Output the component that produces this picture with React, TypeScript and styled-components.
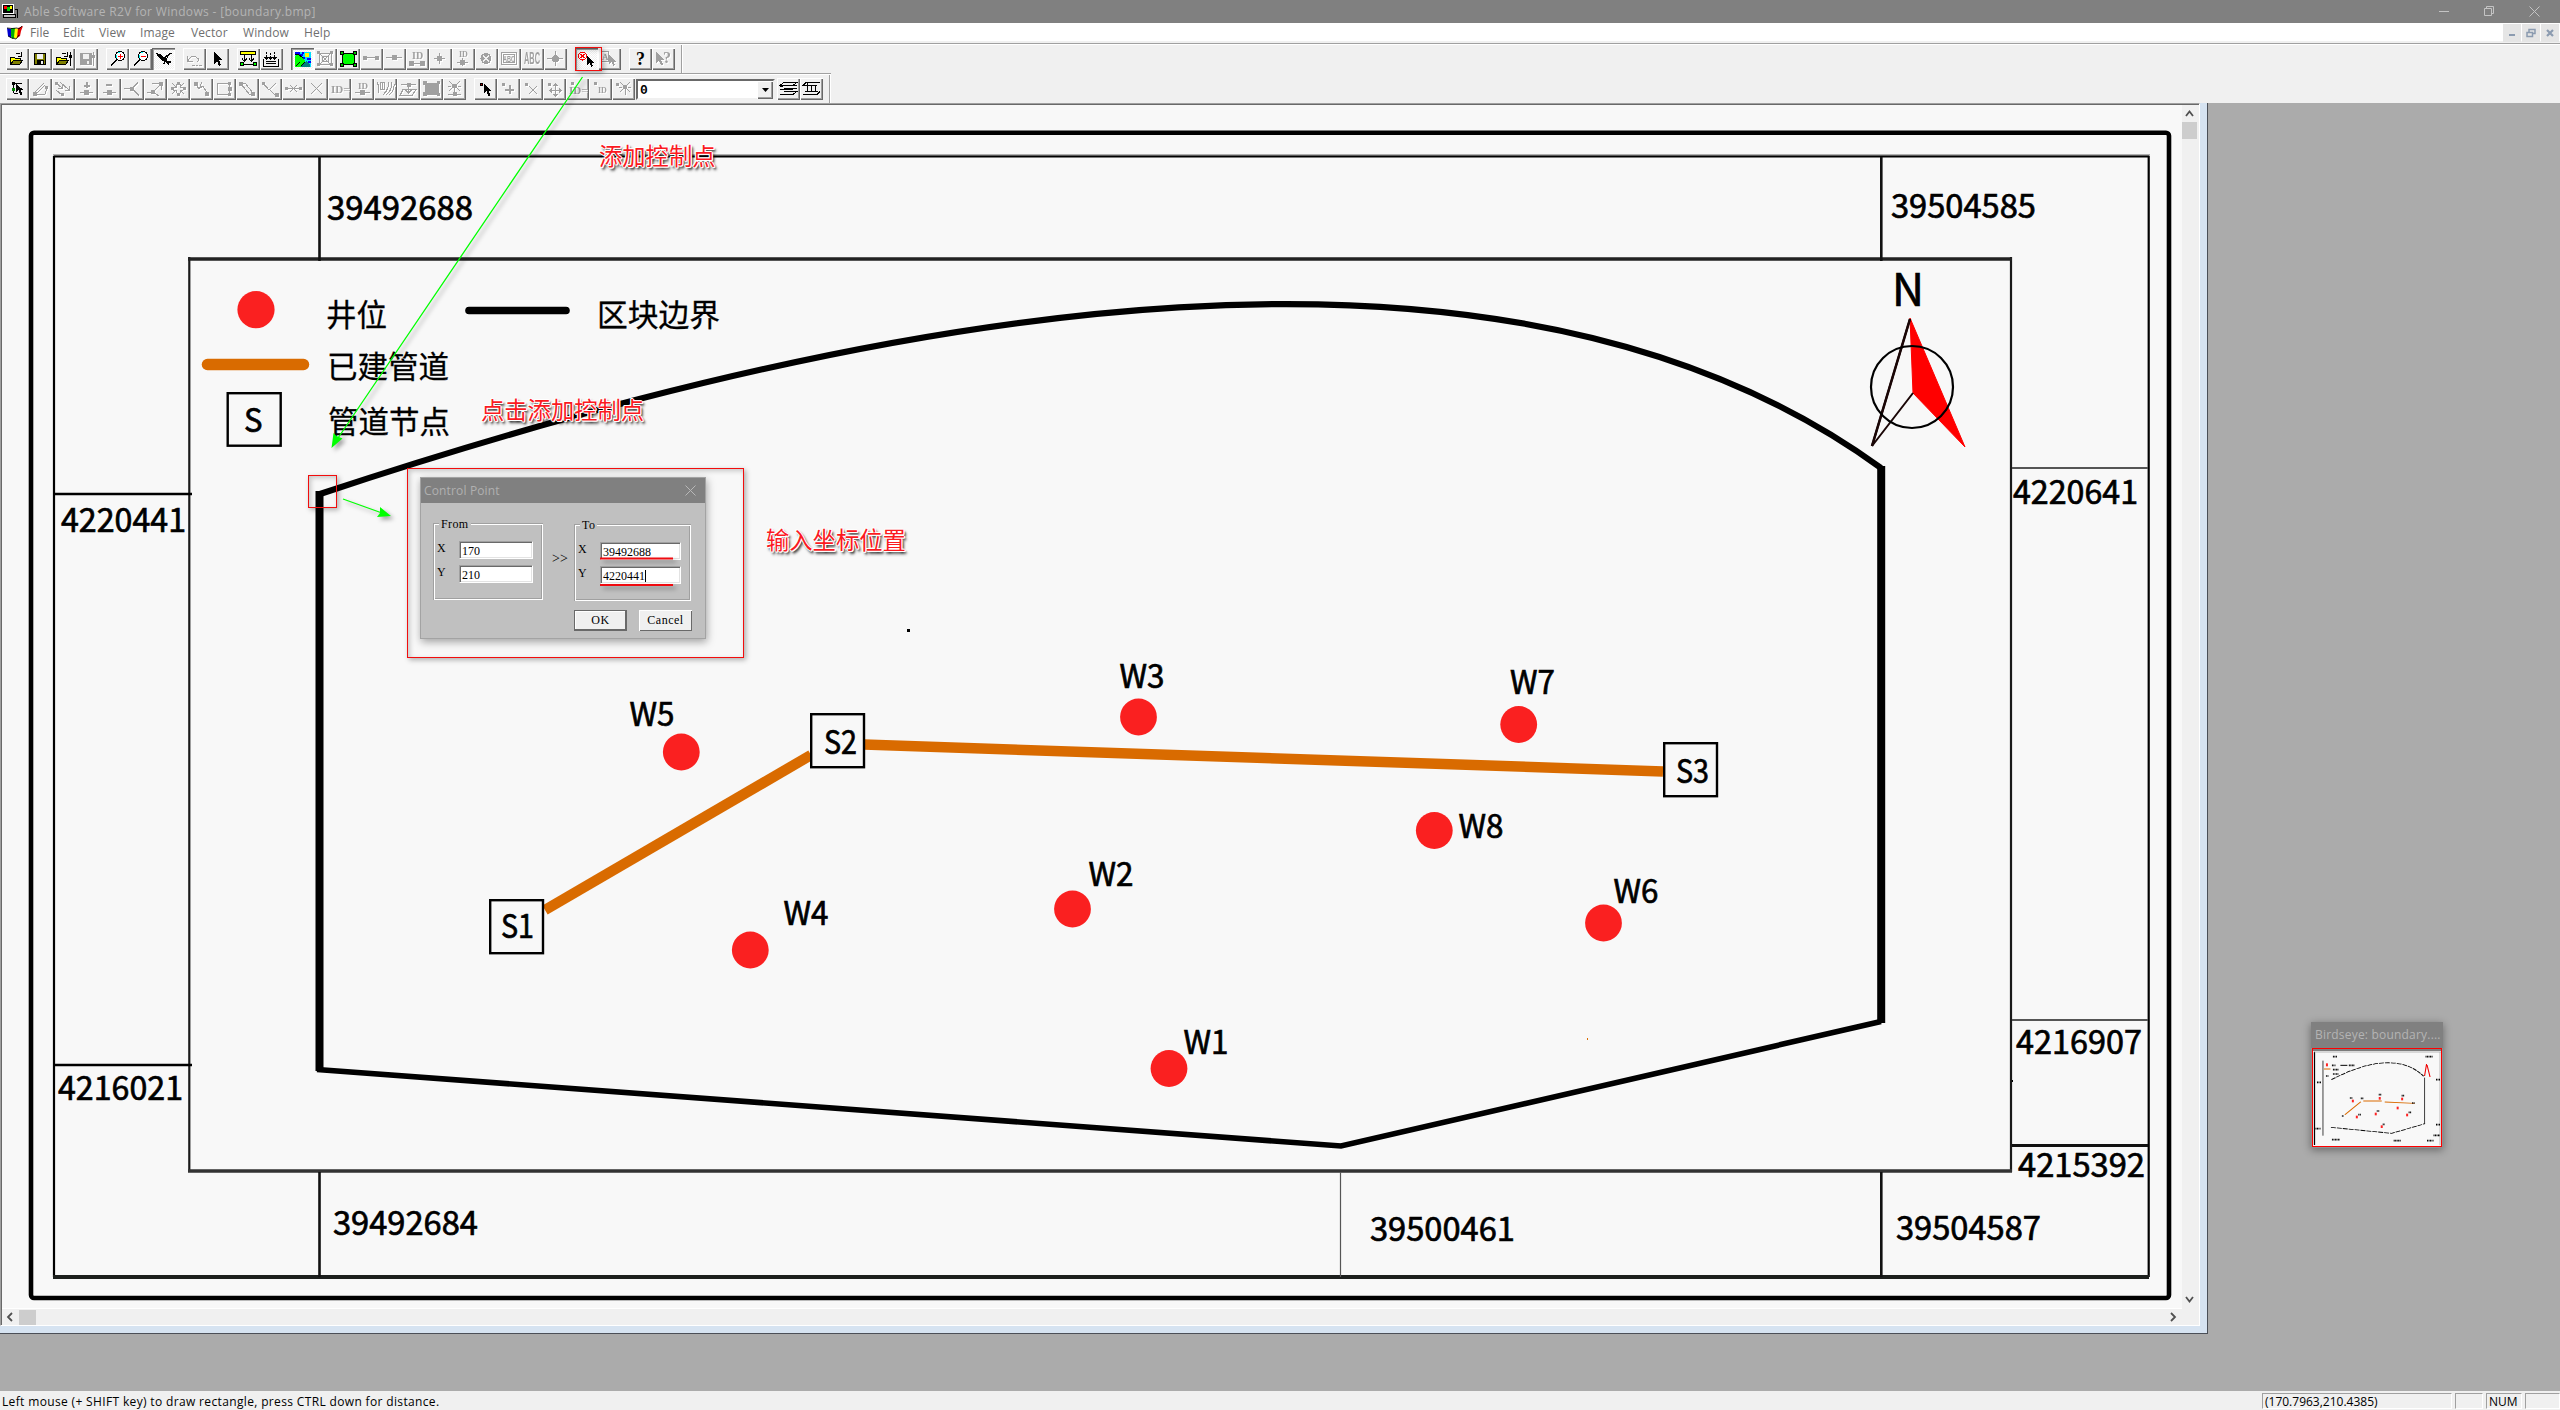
import React from "react";
import styled, { createGlobalStyle, css } from "styled-components";

const UI = `"Open Sans", "Noto Sans", "Noto Sans CJK SC", sans-serif`;
const CJK = `"Noto Sans CJK SC", "Noto Sans", sans-serif`;
const PIXEL = `"Liberation Serif", "Noto Sans CJK SC", serif`;

const Global = createGlobalStyle`
  html, body { margin: 0; padding: 0; overflow: hidden; }
  * { box-sizing: border-box; }
`;

const Screen = styled.div`
  position: relative;
  display: flex;
  flex-direction: column;
  width: 2560px;
  height: 1410px;
  background: #f0f0f0;
  font-family: ${UI};
  font-size: 12px;
  color: #000;
  overflow: hidden;
`;

const TitleBar = styled.header`
  display: flex;
  align-items: center;
  height: 23px;
  flex: none;
  padding: 0 20px 0 2px;
  background: #808080;
  color: #b4b4b4;
`;
const TitleText = styled.span`
  flex: 1;
  margin-left: 6px;
  line-height: 23px;
  letter-spacing: 0.33px;
  white-space: nowrap;
`;
const WindowButtons = styled.div`
  display: flex;
  gap: 35px;
  height: 20px;
  align-items: center;
`;

const MenuBar = styled.nav`
  display: flex;
  align-items: center;
  height: 18px;
  flex: none;
  padding: 0 1px 0 7px;
  background: #fff;
  color: #6f6f6f;
`;
const MenuList = styled.div`
  display: flex;
  flex: 1;
  margin-left: 7px;
`;
const MenuItem = styled.span<{ $w: number }>`
  width: ${(p) => p.$w}px;
  line-height: 18px;
  padding-top: 1px;
  letter-spacing: 0.1px;
  white-space: nowrap;
`;
const MdiButtons = styled.div`
  display: flex;
  gap: 1px;
  height: 18px;
  margin-top: 2px;
`;
const MdiButton = styled.div`
  display: flex;
  align-items: center;
  justify-content: center;
  width: 18px;
  height: 18px;
  background: #e5e5e5;
`;

const ToolArea = styled.div`
  height: 62px;
  flex: none;
  padding-top: 2px;
`;
const ToolRow = styled.div<{ $w?: number }>`
  display: flex;
  align-items: flex-start;
  height: 30px;
  padding: 4px 0 0 6px;
  border-top: 1px solid #a0a0a0;
  box-shadow: inset 0 1px #fff;
  width: ${(p) => (p.$w ? p.$w + "px" : "100%")};
`;
const RowEnd = styled.i<{ $ml: number }>`
  width: 2px;
  height: 28px;
  margin: -3px 0 0 ${(p) => p.$ml}px;
  background: linear-gradient(90deg, #a0a0a0 50%, #fff 50%);
`;
const Group = styled.div<{ $ml?: number }>`
  display: flex;
  margin-left: ${(p) => p.$ml ?? 0}px;
`;
const ToolButton = styled.button<{ $on?: boolean; $off?: boolean }>`
  width: 23px;
  height: 22px;
  padding: 0;
  border: 0;
  background: #f0f0f0;
  box-shadow: inset 1px 1px #fff, inset -1px -1px #696969, inset -2px -2px #a0a0a0;
  ${(p) =>
    p.$on &&
    css`
      background: repeating-conic-gradient(#fff 0 25%, #f0f0f0 0 50%) 0 0 / 2px 2px;
      box-shadow: inset 1px 1px #696969, inset 2px 2px #a0a0a0, inset -1px -1px #fff;
    `}
  svg {
    display: block;
    color: ${(p) => (p.$off ? "#a0a0a0" : "#000")};
    filter: ${(p) => (p.$off ? "drop-shadow(1px 1px 0 #fff)" : "none")};
  }
`;

const Combo = styled.div`
  display: flex;
  width: 139px;
  height: 21px;
  margin: 1px 2px 0 1px;
  border: 2px solid;
  border-color: #696969 #f0f0f0 #f0f0f0 #696969;
  background: #fff;
`;
const ComboValue = styled.span`
  flex: 1;
  padding-left: 2px;
  font: bold 13px/19px "Liberation Mono", monospace;
`;
const ComboArrow = styled.div`
  display: flex;
  align-items: center;
  justify-content: center;
  width: 16px;
  height: 18px;
  background: #f0f0f0;
  box-shadow: inset 1px 1px #fff, inset -1px -1px #696969, inset -2px -2px #a0a0a0;
`;

const Workspace = styled.main`
  position: relative;
  height: 1288px;
  flex: none;
  background: #ababab;
`;
const ChildWindow = styled.section`
  width: 2208px;
  height: 1231px;
  padding: 0 7px 7px 0;
  background: #d6e3f1;
  border-right: 1px solid #4b4f57;
  border-bottom: 1px solid #4b4f57;
`;
const View = styled.div`
  display: grid;
  grid-template-columns: 2180px 17px;
  grid-template-rows: 1203px 17px;
  width: 2200px;
  height: 1223px;
  border-top: 1px solid #a0a0a0;
  border-left: 1px solid #a0a0a0;
  border-right: 1px solid #fff;
  border-bottom: 1px solid #fff;
  background: #f0f0f0;
  box-shadow: inset 1px 1px #696969;
  padding: 1px 0 0 1px;
`;
const Paper = styled.div`
  background: #f8f8f8;
  overflow: hidden;
  svg { display: block; }
`;
const VScroll = styled.div`
  display: flex;
  flex-direction: column;
  align-items: center;
  width: 15px;
  height: 1203px;
`;
const HScroll = styled.div`
  display: flex;
  align-items: center;
  width: 2180px;
  border-top: 1px solid #fff;
`;
const Arrow = styled.div`
  width: 17px;
  height: 17px;
  svg { display: block; }
`;
const Thumb = styled.div<{ $v?: boolean }>`
  width: ${(p) => (p.$v ? 15 : 17)}px;
  height: ${(p) => (p.$v ? 17 : 15)}px;
  background: #cdcdcd;
`;
const Fill = styled.div`
  flex: 1;
`;

const Birdseye = styled.aside`
  position: absolute;
  left: 2311px;
  top: 919px;
  width: 132px;
  height: 126px;
  padding: 0 1px 1px;
  background: #909090;
  box-shadow: 0 2px 8px rgba(0, 0, 0, 0.4);
`;
const BirdTitle = styled.div`
  height: 26px;
  margin: 0 -1px;
  padding-left: 4px;
  line-height: 26px;
  background: #808080;
  color: #b4b4b4;
  white-space: nowrap;
  letter-spacing: 0.2px;
`;
const BirdView = styled.div`
  height: 99px;
  border: 1px solid #f00;
  background: #f8f8f8;
  svg { display: block; }
`;

const StatusBar = styled.footer`
  display: flex;
  gap: 3px;
  height: 19px;
  flex: none;
  padding: 2px 0 1px 2px;
`;
const StatusText = styled.span`
  flex: 1;
  line-height: 18px;
  letter-spacing: 0.35px;
`;
const Pane = styled.span<{ $w: number }>`
  width: ${(p) => p.$w}px;
  padding-left: 2px;
  line-height: 16px;
  border: 1px solid;
  border-color: #a0a0a0 #fff #fff #a0a0a0;
`;

const Frame = styled.div<{ $x: number; $y: number; $w: number; $h: number }>`
  position: absolute;
  left: ${(p) => p.$x}px;
  top: ${(p) => p.$y}px;
  width: ${(p) => p.$w}px;
  height: ${(p) => p.$h}px;
  border: 1px solid #f20d0d;
  box-shadow: 2px 2px 5px rgba(0, 0, 0, 0.3), inset 2px 2px 5px rgba(0, 0, 0, 0.2);
`;
const Note = styled.div<{ $x: number; $y: number }>`
  position: absolute;
  left: ${(p) => p.$x}px;
  top: ${(p) => p.$y}px;
  font: 400 23.3px/26px ${CJK};
  color: #fb1a1f;
  white-space: nowrap;
  text-shadow: 1px 0 #fff, -1px 0 #fff, 0 1px #fff, 0 -1px #fff, 1px 1px #fff, -1px -1px #fff,
    2px 3px 3px rgba(0, 0, 0, 0.75), 2px 2px 2px rgba(0, 0, 0, 0.55);
`;
const Overlay = styled.svg`
  position: absolute;
  inset: 0;
  pointer-events: none;
`;
const Shaded = styled.g`
  filter: drop-shadow(3px 3px 2px rgba(0, 0, 0, 0.35));
`;

const Dialog = styled.div`
  position: absolute;
  left: 420px;
  top: 477px;
  width: 286px;
  height: 162px;
  border: 1px solid #a3a3a3;
  background: #c0c0c0;
  box-shadow: 1px 3px 8px rgba(0, 0, 0, 0.35);
  font: 12px/14px ${PIXEL};
`;
const DialogTitle = styled.div`
  display: flex;
  align-items: center;
  justify-content: space-between;
  height: 25px;
  padding: 0 9px 0 3px;
  background: #808080;
  color: #b0b0b0;
  font: 12px/25px ${UI};
  letter-spacing: 0.15px;
`;
const DialogBody = styled.div`
  display: flex;
  align-items: flex-start;
  padding: 20px 13px 0 12px;
`;
const Box = styled.fieldset<{ $w: number; $top: number }>`
  width: ${(p) => p.$w}px;
  height: 77px;
  min-width: 0;
  margin: ${(p) => p.$top}px 0 0;
  padding: 18px 0 0 4px;
  border: 0;
  position: relative;
  box-shadow: inset 1px 1px #a0a0a0, inset -1px -1px #fff, inset 2px 2px #fff, inset -2px -2px #a0a0a0;
`;
const BoxTitle = styled.span`
  position: absolute;
  left: 6px;
  top: -6px;
  padding: 0 2px;
  background: #c0c0c0;
  letter-spacing: 0.4px;
`;
const Field = styled.label<{ $gap: number }>`
  display: grid;
  grid-template-columns: ${(p) => p.$gap}px 1fr;
  height: 24px;
`;
const Value = styled.span<{ $w: number }>`
  width: ${(p) => p.$w}px;
  height: 18px;
  padding: 1px 0 0 2px;
  font: 12px/16px ${PIXEL};
  background: #fff;
  border: 1px solid;
  border-color: #a0a0a0 #fff #fff #a0a0a0;
  box-shadow: inset 1px 1px #696969, inset -1px -1px #e3e3e3;
`;
const Caret = styled.i`
  display: inline-block;
  width: 1px;
  height: 12px;
  background: #000;
  vertical-align: -2px;
`;
const Chevrons = styled.span`
  width: 31px;
  padding: 29px 0 0 3px;
  text-align: center;
  font-size: 14px;
`;
const DialogButtons = styled.div`
  display: flex;
  gap: 12px;
  justify-content: flex-end;
  padding: 9px 13px 0 0;
`;
const DialogButton = styled.button<{ $main?: boolean }>`
  width: 53px;
  height: 21px;
  padding: 0;
  border: 0;
  background: #f0f0f0;
  font: 12px/21px ${PIXEL};
  letter-spacing: 0.5px;
  box-shadow: ${(p) =>
    p.$main
      ? "inset 0 0 0 1px #696969, inset -2px -2px #696969, inset 2px 2px #fff"
      : "inset 1px 1px #fff, inset -1px -1px #696969"};
`;

/* ---------- toolbar glyphs ---------- */

const L = ({ d, c = "currentColor", w = 1, f = "none" }: { d: string; c?: string; w?: number; f?: string }) => (
  <path d={d} stroke={c} strokeWidth={w} fill={f} />
);
const Sq = ({ x, y, s = 3, c = "currentColor" }: { x: number; y: number; s?: number; c?: string }) => (
  <rect x={x} y={y} width={s} height={s} fill={c} />
);
const Tx = ({ x, y, s, t }: { x: number; y: number; s: number; t: string }) => (
  <text x={x} y={y} fontSize={s} fontWeight="bold" fontFamily="Liberation Serif, serif" fill="currentColor">{t}</text>
);
const folder = (
  <>
    <path d="M4.500 16.500V9.500h4l1 1h5v2" stroke="#000" fill="#ffff00" />
    <path d="M4.500 16.500l3-4h9l-3 4z" stroke="#000" fill="#808000" />
    <L d="M9.500 6.500q3-3 5 0M15.500 4v4h-4" />
  </>
);
const disk = (c: string, fill: string) => (
  <>
    <path d="M5.500 5.500h11v11h-11z" stroke={c} fill={fill} />
    <rect x="8" y="6" width="6" height="5" fill="#f0f0f0" />
    <rect x="8" y="12" width="7" height="4" fill={c} />
    <rect x="12" y="13" width="2" height="3" fill="#f0f0f0" />
  </>
);
const slider = <><L d="M18.500 4v14" /><Sq x={17} y={7} /></>;
const pointer = <path d="M8 4v12l3-3 2 5 2-1-2-5h4z" fill="currentColor" />;
const smallPtr = <path d="M11 7v9l2.500-2 2 4 1.500-1-2-3.500h3z" fill="currentColor" />;
const lens = (plus: boolean) => (
  <>
    <circle cx="14" cy="8" r="4.500" stroke="#000" fill="#fff" />
    <L d="M10.500 7v3M12 4.500h2" c="#00ffff" />
    <L d="M10.500 12L5 17.500" w={2} />
    <L d={plus ? "M11.500 8.500h5M14 6v5" : "M11.500 8.500h5"} c="#f00" />
  </>
);

const glyphs: Record<string, React.ReactNode> = {
  open: folder,
  save: disk("#000", "#808000"),
  openProj: <>{folder}{slider}</>,
  saveProj: <>{disk("#a0a0a0", "#a0a0a0")}{slider}</>,
  zoomIn: lens(true),
  zoomOut: lens(false),
  bird: (
    <>
      <path d="M4 5l4 1 4 4 2 0 2-1-2 5-3-1-3-2-2-2z" fill="#000" />
      <L d="M12 10l6-4M18 5.500h2M12 12l5 4M13 11l-1 5M15 14h4" w={1.500} />
    </>
  ),
  undo: <L d="M4.500 8v5h5M5 13q3-7 8-4t1 5M9 17.500h3M13 17.500h2M16 17.500h3" />,
  pointer,
  lineTop: (
    <>
      <rect x="3.500" y="3.500" width="15" height="3" fill="#ffff00" stroke="#000" />
      <L d="M7.500 7v6M5 10.500l2.500 3 2.500-3M14.500 7v6M12 10.500l2.500 3 2.500-3M6 16.500h11" />
      <path d="M3.500 14.500h3v3h-3zM16.500 14.500h3v3h-3z" fill="#00ff00" stroke="#000" />
    </>
  ),
  lines: (
    <L d="M6.500 4v2M6.500 7v4M10.500 5v2M10.500 8v3M14.500 4v2M14.500 7v4M4.500 9l2 2 2-2M8.500 9l2 2 2-2M12.500 9l2 2 2-2M3.500 11v7h15v-7M6 13.500h10M6 15.500h10" />
  ),
  image: (
    <>
      <rect x="4" y="4" width="16" height="15" fill="#00e0ff" />
      <L d="M4 5h5M8 7h4M16 11h4M11 10h3M11 5h2M17 14h3" c="#0000ff" w={1.500} />
      <path d="M4 8l3-2 5 4 2 3v3l-4 3H4z" fill="#00ff00" />
      <path d="M10 19l5-6 4 3v3z" fill="#008080" />
      <L d="M4 7l3-1 5 4M5 18l4-4M10 18l4-4" c="#000" />
      <circle cx="16" cy="7" r="2.500" fill="#ffff00" />
    </>
  ),
  nested: (
    <>
      <L d="M5.500 5.500h12v11h-12zM8.500 8.500h6v5h-6zM4 4l14 14M18 4L4 18" />
      <Sq x={3} y={3} /><Sq x={16} y={3} /><Sq x={3} y={15} /><Sq x={16} y={15} />
    </>
  ),
  area: (
    <>
      <rect x="5.500" y="5.500" width="12" height="11" fill="#00ff00" stroke="#000" />
      {[[3, 3], [16, 3], [3, 15], [16, 15]].map(([x, y]) => (
        <rect key={x + "" + y} x={x + 0.5} y={y + 0.5} width="3" height="3" fill="#00c000" stroke="#000" />
      ))}
    </>
  ),
  segment: <><L d="M4 9.500h15" /><Sq x={3} y={8} s={4} /><Sq x={15} y={8} s={4} /></>,
  node: <><L d="M3 9.500h16" /><Sq x={9} y={7} s={5} /></>,
  idSegment: <><Tx x={6} y={11} s={10} t="ID" /><L d="M4 15.500h14" /><Sq x={3} y={13} s={5} /><Sq x={14} y={13} s={5} /></>,
  point: <><L d="M10.500 5v11M5 10.500h11" /><Sq x={8} y={8} s={5} /></>,
  idPoint: <><Tx x={7} y={9} s={8} t="ID" /><L d="M10.500 10v8M5 14.500h11" /><Sq x={8} y={12} s={5} /></>,
  crossDot: <><circle cx="11" cy="10.500" r="5.500" fill="currentColor" /><L d="M8 7.500l6 6M14 7.500l-6 6" c="#f0f0f0" /></>,
  abcBox: <><L d="M3.500 4.500h15v12h-15zM5.500 6.500h11v8h-11z" /><text x="5" y="14" fontSize="9" textLength="12" lengthAdjust="spacingAndGlyphs" fontWeight="bold" fontFamily="Liberation Sans" fill="currentColor">ABC</text></>,
  abc: <text x="3" y="16" fontSize="16" textLength="16" lengthAdjust="spacingAndGlyphs" fontWeight="bold" fontFamily="Liberation Sans" fill="currentColor">ABC</text>,
  target: <><L d="M11.500 3v15M3 10.500h16" /><circle cx="11.500" cy="10.500" r="3.500" fill="currentColor" /></>,
  control: (
    <>
      <circle cx="7.500" cy="8" r="4" stroke="#f00" fill="none" />
      <L d="M5.500 6l4 4M9.500 6l-4 4" c="#f00" />
      <path d="M12 8v9l2.500-2 2 4 1.500-1-2-3.500h3z" fill="#000" />
    </>
  ),
  textPtr: <><L d="M3.500 3.500h7v10h-7z" /><Tx x={4} y={12} s={9} t="A" />{smallPtr}</>,
  help: <text x="7" y="17" fontSize="18" fontWeight="bold" fontFamily="Liberation Serif" fill="#000">?</text>,
  ctxHelp: <><path d="M4 4v11l3-2.500 2 5 2-1-2-4.500h3z" fill="currentColor" /><text x="11" y="15" fontSize="16" fontWeight="bold" fontFamily="Liberation Serif" fill="currentColor">?</text></>,

  edit: (
    <>
      <L d="M7.500 5v10M7.500 5.500h8M7.500 15.500h4" />
      <path d="M10 6v8l2.500-2 2 5 2-1-2-4h3z" fill="#000" />
      <Sq x={6} y={4} c="#000" /><Sq x={6} y={10} s={3} c="#008000" />
    </>
  ),
  draw: <><L d="M6 14L15 5M8 15l8-8M5 16.500h11M16 16l2-6" /><Sq x={4} y={14} s={4} /><Sq x={16} y={8} /></>,
  drag: <><L d="M4 5l6 5M10 6v4H6M4 12l6 5M8 4l9 8M17 8v4h-4" /><Sq x={3} y={4} /><Sq x={9} y={15} /></>,
  addNode: <><L d="M11.500 4v6M8.500 7.500h6" w={2} /><L d="M5 14.500h13" /><Sq x={9} y={12} s={5} /></>,
  delNode: <><L d="M8 7h6" w={2} /><L d="M5 14.500h13" /><Sq x={9} y={12} s={5} /></>,
  split: <><L d="M3 10.500h8l6-6M11 10.500l7 7" /><Sq x={9} y={9} s={4} /></>,
  moveSeg: <><L d="M3 14h6l6-6M8 5.500h9M17 5v7M9 14l6 4" /><Sq x={7} y={12} s={4} /><Sq x={15} y={4} s={4} /></>,
  explode: (
    <>
      <L d="M5 5l4 4M17 5l-4 4M5 16l4-4M17 16l-4-4M9 6v3H6M13 6v3h3M9 15v-3H6M13 15v-3h3" />
      <Sq x={4} y={9} /><Sq x={16} y={9} /><Sq x={10} y={4} /><Sq x={10} y={15} />
    </>
  ),
  join: <><L d="M5 5l4 6 4-3 4 7M12 4l-3 7" /><Sq x={4} y={4} s={4} /><Sq x={15} y={14} s={4} /></>,
  close: <><L d="M4.500 5.500h12v11h-12z" /><Sq x={15} y={4} /><Sq x={15} y={9} s={4} /><Sq x={15} y={15} /></>,
  twoNodes: <><L d="M5 6l9 11M9 5l8 10M6 5h4M14 16h3" /><Sq x={3} y={4} s={4} /><Sq x={15} y={14} s={4} /></>,
  cut: <><L d="M4 5l6 7 7-7M10 11l7 7" /><Sq x={3} y={4} /><Sq x={16} y={15} s={4} /></>,
  cutLine: <><L d="M3 10.500h17M8 7l7 7M15 7l-7 7" /><Sq x={3} y={9} /><Sq x={17} y={9} /></>,
  del: <L d="M6 5l11 11M17 5L6 16" />,
  idEq: <Tx x={3} y={15} s={11} t="ID=" />,
  idNode: <><Tx x={7} y={11} s={9} t="ID" /><L d="M4 14.500h15" /><Sq x={9} y={12} s={5} /></>,
  contour: <L d="M3 4q3 6 1 11M8 4v8M6.500 4.500h4v7h-4zM14 4q2 6-5 13M17 4q2 8-5 13M20 4q1 9-5 13" />,
  surface: <><L d="M6 11.500h13l-4 6H3zM11.500 6v9M8.500 12l3 3 3-3M4 6.500h15" /><Sq x={10} y={5} s={4} /></>,
  polygon: <><rect x="5" y="5" width="14" height="12" fill="currentColor" /><Sq x={3} y={3} s={4} /><Sq x={17} y={3} s={3} /><Sq x={3} y={14} s={4} /><Sq x={17} y={15} s={3} /></>,
  lamp: (
    <>
      <circle cx="11.500" cy="8" r="2.500" fill="currentColor" />
      <L d="M11.500 8v8M6 3l3 3M17 3l-3 3M5 8.500h3M15 8.500h3M6 13l3-3M17 13l-3-3M5 16.500h13" />
      <Sq x={10} y={14} s={4} />
    </>
  ),
  ptEdit: <><L d="M6.500 5.500h2v2h-2z" c="#000" f="#c00000" /><path d="M10 6v9l2.500-2 2 5 2-1-2-4h3z" fill="#000" /></>,
  ptAdd: <><Sq x={5} y={5} /><L d="M12.500 7v9M8 12h9" w={2} /></>,
  ptDel: <><Sq x={5} y={5} /><L d="M9 8l8 8M17 8l-8 8" /></>,
  ptMove: <><Sq x={5} y={5} /><L d="M12.500 6v12M7 12.500h11M10.500 8l2-2 2 2M10.500 16l2 2 2-2M9 10.500l-2 2 2 2M16 10.500l2 2-2 2" /></>,
  ptIdEq: <><Sq x={5} y={4} /><Tx x={3} y={16} s={11} t="ID=" /></>,
  ptId: <><Sq x={5} y={4} /><Tx x={9} y={15} s={8} t="ID" /></>,
  ptLamp: <><Sq x={4} y={5} /><circle cx="13" cy="9" r="2.500" fill="currentColor" /><L d="M13 9v8M8 4l3 3M18 4l-3 3M7 9.500h3M16 9.500h3M8 14l3-3M18 14l-3-3" /></>,
  layers: <L d="M7 4.500h13l-4 3H3zM6 8.500h-3M7 10.500h13M16 11.500H3M7 13.500h13l-4 3H3M20 7.500h-3" />,
  layerTable: <L d="M5 4.500h15M17 7.500H3l3-3M5 13.500h13M7.500 5v8M11.500 8v5M15.500 8v5M3 16.500h14l3-3" />,
};

const Tool = ({ g, on, off }: { g: string; on?: boolean; off?: boolean }) => (
  <ToolButton $on={on} $off={off} aria-label={g}>
    <svg width="23" height="22" viewBox="0 0 23 22" fill="none" shapeRendering="crispEdges">{glyphs[g]}</svg>
  </ToolButton>
);
const off1 = ["segment", "node", "idSegment", "point", "idPoint", "crossDot", "abcBox", "abc", "target"];
const off2 = ["draw", "drag", "addNode", "delNode", "split", "moveSeg", "explode", "join", "close", "twoNodes", "cut", "cutLine", "del", "idEq", "idNode", "contour", "surface", "polygon", "lamp"];
const off3 = ["ptAdd", "ptDel", "ptMove", "ptIdEq", "ptId", "ptLamp"];

/* ---------- map drawing ---------- */

const coords: [string, number, number, number][] = [
  ["39492688", 327, 220, 146],
  ["39504585", 1891, 218, 145],
  ["4220441", 61, 531.5, 125],
  ["4220641", 2013, 504, 125],
  ["4216907", 2016, 1053.5, 126],
  ["4215392", 2018, 1177, 127],
  ["39504587", 1896, 1239.5, 145],
  ["4216021", 58, 1100, 125],
  ["39492684", 333, 1234.5, 145],
  ["39500461", 1370, 1241, 145],
];
const wells: [string, number, number, number, number][] = [
  ["W1", 1169, 1068.5, 1183.5, 1053.5],
  ["W2", 1072.5, 909, 1088.5, 885.5],
  ["W3", 1138.5, 717, 1119.5, 687.5],
  ["W4", 750.3, 950, 783.5, 924.5],
  ["W5", 681.3, 752, 629.5, 726],
  ["W6", 1603.5, 923, 1613.5, 902.5],
  ["W7", 1518.7, 724.5, 1510, 693.5],
  ["W8", 1434.3, 830.5, 1458.5, 837.5],
];
const stations: [string, number, number, number, number][] = [
  ["S1", 489, 899, 501, 938],
  ["S2", 810, 713, 824, 753.5],
  ["S3", 1663, 742, 1676, 782.5],
];
const legend: [string, number, number, number][] = [
  ["井位", 326, 325.5, 61],
  ["区块边界", 597, 325.5, 123],
  ["已建管道", 327, 378, 122],
  ["管道节点", 328, 432.5, 122],
];

const MapDrawing = () => (
  <svg width="2180" height="1203" viewBox="2 105 2180 1203" fill="none" stroke="#000" fontFamily={CJK}>
    <rect x="31" y="132.800" width="2138" height="1165.200" rx="3" strokeWidth="4.600" />
    <path d="M53 155h2097" stroke="#b0b0b0" strokeWidth="2" />
    <path d="M54 156.500h2095M54 156v1121M2148.700 156v1121" strokeWidth="2.200" />
    <path d="M53 1277h2096" stroke="#1c1f1d" strokeWidth="4" />
    <path d="M189.300 257v915M2011 257v915" stroke="#1a1a1a" strokeWidth="2.200" />
    <path d="M188 259h1824" stroke="#222" strokeWidth="3.400" />
    <path d="M188 1171h1824" stroke="#333" strokeWidth="3.600" />
    <path d="M319.500 157v104M1881.300 157v104M319.500 1172v105M1881.300 1172v105" stroke="#111" strokeWidth="2.600" />
    <path d="M1340.500 1172v105" stroke="#555" strokeWidth="1.200" />
    <path d="M54 494h138M54 1065h138" strokeWidth="2.600" />
    <path d="M2012 468h136M2012 1020h136" stroke="#555" strokeWidth="1.800" />
    <path d="M2012 1145.500h136" stroke="#111" strokeWidth="2.800" />
    <path d="M319.500 491V1071M1881.200 466V1023" strokeWidth="8" />
    <path d="M320 494C900 301 1510 198 1881 468" strokeWidth="6.200" />
    <path d="M317 1069.500L1341 1146L1881 1021.500" strokeWidth="5.600" />

    <path d="M545 910L811 755" stroke="#d96b00" strokeWidth="10.500" />
    <path d="M864 744.500L1663 771.500" stroke="#d96b00" strokeWidth="10.500" />

    <g stroke="none" fill="#fa2020">
      <circle cx="256" cy="309.700" r="18.600" />
      {wells.map(([n, x, y]) => <circle key={n} cx={x} cy={y} r="18.400" />)}
    </g>
    <path d="M207.500 364.500h96" stroke="#d96b00" strokeWidth="11.500" strokeLinecap="round" />
    <path d="M469 310.500h97" strokeWidth="7.600" strokeLinecap="round" />
    <rect x="227.700" y="393.200" width="53" height="52.500" strokeWidth="2.400" />
    {stations.map(([n, x, y]) => (
      <rect key={n} x={x + 1.2} y={y + 1.2} width="52.800" height="53" strokeWidth="2.400" fill="#f8f8f8" />
    ))}

    <path d="M1910 318L1913 393L1965 447z" fill="#f00" stroke="#f00" />
    <path d="M1910 319L1872 446L1913 393" stroke="#1a0606" strokeWidth="2" />
    <path d="M1910 319L1872 446" stroke="#1a0606" strokeWidth="2.600" />
    <circle cx="1912" cy="387" r="41" strokeWidth="2.200" />

    <g strokeWidth="0.700" fill="#000" fontSize="33">
      <text x="1892" y="306" fontSize="45" textLength="32" lengthAdjust="spacingAndGlyphs">N</text>
      <text x="244" y="432" textLength="18.500" lengthAdjust="spacingAndGlyphs">S</text>
      {coords.map(([t, x, y, w]) => <text key={t} x={x} y={y} textLength={w} lengthAdjust="spacingAndGlyphs">{t}</text>)}
      {wells.map(([t, , , x, y]) => <text key={t} x={x} y={y} textLength="45" lengthAdjust="spacingAndGlyphs">{t}</text>)}
      {stations.map(([t, , , x, y]) => <text key={t} x={x} y={y} textLength="33" lengthAdjust="spacingAndGlyphs">{t}</text>)}
      {legend.map(([t, x, y, w]) => <text key={t} x={x} y={y} fontSize="31" strokeWidth="0.300" textLength={w} lengthAdjust="spacingAndGlyphs">{t}</text>)}
    </g>
    <g stroke="none" fill="#000">
      <rect x="907" y="629" width="3" height="3" />
      <rect x="1587" y="1038" width="1" height="2" fill="#d96b00" />
      <rect x="2012" y="1080" width="1" height="2" />
    </g>
  </svg>
);

const miniWells: [number, number][] = [[1152, 364], [1206, 356], [1251, 358], [1242, 385], [1261, 406], [1198, 403], [1160, 412], [1210, 441]];
const miniLabels: [number, number, number][] = [[1112, 231, 9], [1298, 231, 15], [1319, 300, 9], [1080, 308, 9], [1077, 447, 10], [1110, 480, 16], [1234, 483, 14], [1301, 483, 13], [1319, 435, 8], [1314, 467, 13], [1110, 257, 7], [1144, 257, 12], [1112, 270, 12], [1112, 283, 12], [1098, 289, 6], [1146, 355, 6], [1168, 356, 6], [1204, 345, 6], [1250, 348, 5], [1200, 394, 6], [1264, 398, 6], [1163, 405, 5], [1212, 434, 4], [1271, 370, 5], [1130, 409, 4]];

const MiniMap = () => (
  <svg width="128" height="97" viewBox="1072 208 257 291" preserveAspectRatio="none" fill="none" stroke="#000">
    <path d="M1072 211h257M1075 216v280" strokeWidth="2.500" />
    <path d="M1075 217h254M1327 217v280" stroke="#aaa" strokeWidth="2" />
    <path d="M1092 243v225M1296 294v138" strokeWidth="1.800" />
    <path d="M1109 300C1180 245 1250 225 1294 290M1108 443L1230 461L1297 432" strokeWidth="2.400" strokeDasharray="10 2" />
    <path d="M1127 257h14" strokeWidth="3" />
    <path d="M1094 268h13M1136 405L1168 366M1173 364h37M1216 367L1276 371" stroke="#d96b00" strokeWidth="2.600" />
    <path d="M1300 253l-4 36M1301 256l6 36" stroke="#e00" strokeWidth="2.200" />
    <g fill="#f22" stroke="none">
      <rect x="1098" y="251" width="4" height="9" />
      {miniWells.map(([x, y]) => <rect key={x} x={x - 2} y={y - 4} width="4" height="8" />)}
    </g>
    <g strokeWidth="5" strokeDasharray="2 1">
      {miniLabels.map(([x, y, w]) => <path key={`${x}-${y}`} d={`M${x} ${y}h${w}`} />)}
    </g>
  </svg>
);

const menus: [string, number][] = [["File", 33], ["Edit", 36], ["View", 41], ["Image", 51], ["Vector", 52], ["Window", 61], ["Help", 40]];

export default function App() {
  return (
    <Screen>
      <Global />
      <TitleBar>
        <svg width="16" height="17" viewBox="0 0 16 17" shapeRendering="crispEdges">
          <path d="M.5 1.500h11v9h-11z" fill="#000" stroke="#fff" />
          <path d="M2 3h3v3H2z" fill="#f00" /><path d="M5 4h3v4H5z" fill="#0c0" /><path d="M8 3h2v3H8z" fill="#ff0" />
          <path d="M1 11.500h12v3H1z" fill="#c0c0c0" stroke="#000" /><path d="M13 6h2v9" stroke="#000" fill="none" />
        </svg>
        <TitleText>Able Software R2V for Windows - [boundary.bmp]</TitleText>
        <WindowButtons>
          <svg width="10" height="11"><path d="M0 5.500h10" stroke="#c4c4c4" /></svg>
          <svg width="10" height="11" fill="none" stroke="#c4c4c4"><path d="M.5 2.500h7v7h-7zM2.500 2.500v-2h7v7h-2" /></svg>
          <svg width="11" height="11" stroke="#c4c4c4"><path d="M.5.5l10 10M10.500.5l-10 10" /></svg>
        </WindowButtons>
      </TitleBar>
      <MenuBar>
        <svg width="16" height="15" viewBox="0 0 16 15">
          <path d="M0 3l4 1v9l-3-2z" fill="#0000d0" /><path d="M4 3h4l1 9-4 2-1-3z" fill="#00b000" />
          <path d="M8 3l3 1v7l-2 3-2-2z" fill="#ffff00" /><path d="M11 3l5-2-2 5-1 5-3 2z" fill="#e00000" />
          <path d="M0 3l5 .5 5-.5 2 1 3-3M1 11l4 2 4 1 3-4" fill="none" stroke="#000" strokeWidth=".8" />
        </svg>
        <MenuList>
          {menus.map(([t, w]) => <MenuItem key={t} $w={w}>{t}</MenuItem>)}
        </MenuList>
        <MdiButtons>
          <MdiButton><svg width="8" height="8"><path d="M1 6h6" stroke="#8b9bb0" strokeWidth="2" /></svg></MdiButton>
          <MdiButton><svg width="10" height="10" fill="none" stroke="#8b9bb0" strokeWidth="1.500"><path d="M1 4.500h5.500v4H1zM3 4V1.500h6v4H7" /></svg></MdiButton>
          <MdiButton><svg width="8" height="8"><path d="M1 1l6 6M7 1L1 7" stroke="#8b9bb0" strokeWidth="2.200" /></svg></MdiButton>
        </MdiButtons>
      </MenuBar>

      <ToolArea>
        <ToolRow>
          <Group><Tool g="open" /><Tool g="save" /><Tool g="openProj" /><Tool g="saveProj" off /></Group>
          <Group $ml={8}><Tool g="zoomIn" /><Tool g="zoomOut" /><Tool g="bird" on /></Group>
          <Group $ml={8}><Tool g="undo" off /><Tool g="pointer" /></Group>
          <Group $ml={8}><Tool g="lineTop" /><Tool g="lines" /></Group>
          <Group $ml={8}>
            <Tool g="image" on /><Tool g="nested" off /><Tool g="area" />
            {off1.map((g) => <Tool key={g} g={g} off />)}
          </Group>
          <Group $ml={8}><Tool g="control" on /><Tool g="textPtr" off /></Group>
          <Group $ml={8}><Tool g="help" /><Tool g="ctxHelp" off /></Group>
          <RowEnd $ml={6} />
        </ToolRow>
        <ToolRow $w={831}>
          <Group><Tool g="edit" />{off2.map((g) => <Tool key={g} g={g} off />)}</Group>
          <Group $ml={8}><Tool g="ptEdit" />{off3.map((g) => <Tool key={g} g={g} off />)}</Group>
          <Combo>
            <ComboValue>0</ComboValue>
            <ComboArrow><svg width="7" height="4"><path d="M0 0h7L3.500 4z" /></svg></ComboArrow>
          </Combo>
          <Group><Tool g="layers" /><Tool g="layerTable" /></Group>
          <RowEnd $ml={6} />
        </ToolRow>
      </ToolArea>

      <Workspace>
        <ChildWindow>
          <View>
            <Paper><MapDrawing /></Paper>
            <VScroll>
              <Arrow><svg width="17" height="17"><path d="M5 11l3.500-4.500L12 11" fill="none" stroke="#505050" strokeWidth="1.800" /></svg></Arrow>
              <Thumb $v />
              <Fill />
              <Arrow><svg width="17" height="17"><path d="M5 6l3.500 4.500L12 6" fill="none" stroke="#505050" strokeWidth="1.800" /></svg></Arrow>
            </VScroll>
            <HScroll>
              <Arrow><svg width="17" height="17"><path d="M10 4L6 8l4 4" fill="none" stroke="#505050" strokeWidth="1.800" /></svg></Arrow>
              <Thumb />
              <Fill />
              <Arrow><svg width="17" height="17"><path d="M6 4l4 4-4 4" fill="none" stroke="#505050" strokeWidth="1.800" /></svg></Arrow>
            </HScroll>
          </View>
        </ChildWindow>
        <Birdseye>
          <BirdTitle>Birdseye: boundary....</BirdTitle>
          <BirdView><MiniMap /></BirdView>
        </Birdseye>
      </Workspace>

      <StatusBar>
        <StatusText>Left mouse (+ SHIFT key) to draw rectangle, press CTRL down for distance.</StatusText>
        <Pane $w={190}>(170.7963,210.4385)</Pane>
        <Pane $w={28} />
        <Pane $w={36}>NUM</Pane>
        <Pane $w={35} />
      </StatusBar>

      <Frame $x={407} $y={468} $w={337} $h={190} />
      <Dialog>
        <DialogTitle>
          Control Point
          <svg width="11" height="11" stroke="#b8b8b8"><path d="M.5.5l10 10M10.500.5l-10 10" /></svg>
        </DialogTitle>
        <DialogBody>
          <Box $w={110} $top={0}>
            <BoxTitle>From</BoxTitle>
            <Field $gap={22}>X<Value $w={74}>170</Value></Field>
            <Field $gap={22}>Y<Value $w={74}>210</Value></Field>
          </Box>
          <Chevrons>&gt;&gt;</Chevrons>
          <Box $w={117} $top={1}>
            <BoxTitle>To</BoxTitle>
            <Field $gap={22}>X<Value $w={81}>39492688</Value></Field>
            <Field $gap={22}>Y<Value $w={81}>4220441<Caret /></Value></Field>
          </Box>
        </DialogBody>
        <DialogButtons>
          <DialogButton $main>OK</DialogButton>
          <DialogButton>Cancel</DialogButton>
        </DialogButtons>
      </Dialog>

      <Frame $x={308} $y={475} $w={29} $h={33} />
      <Frame $x={575} $y={47} $w={27} $h={24} />
      <Overlay width="2560" height="1410" fill="none">
        <Shaded>
          <path d="M582.500 77L336 441M343 499L382 513" stroke="#00ff00" strokeWidth="1.300" />
          <path d="M331.500 448l2-15 3 3 6 2.500zM391 516l-14 1 3-4 0-6z" fill="#00ff00" />
          <path d="M600 558.500h73M600 585h73" stroke="#f00b10" strokeWidth="2" />
        </Shaded>
      </Overlay>
      <Note $x={599} $y={142}>添加控制点</Note>
      <Note $x={481} $y={396}>点击添加控制点</Note>
      <Note $x={766} $y={526}>输入坐标位置</Note>
    </Screen>
  );
}
